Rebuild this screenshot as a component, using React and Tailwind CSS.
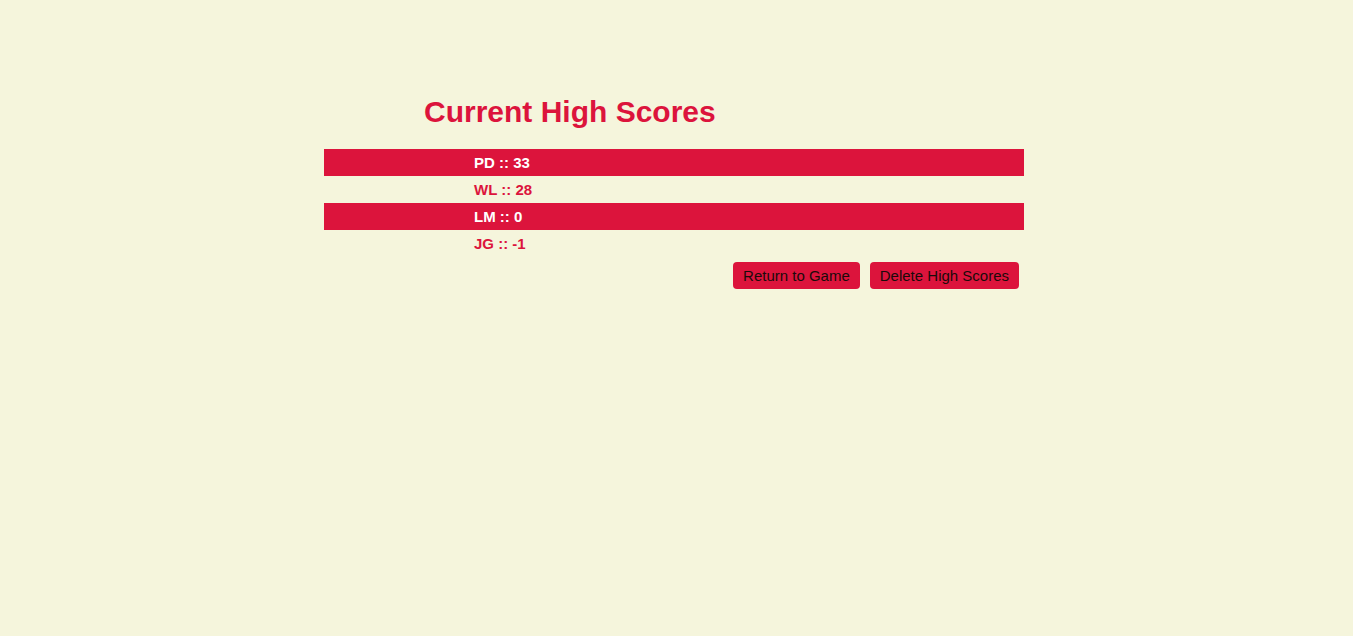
import React from 'react';

const scores = [
  { name: 'PD', score: 33 },
  { name: 'WL', score: 28 },
  { name: 'LM', score: 0 },
  { name: 'JG', score: -1 },
];

export default function App() {
  return (
    <div className="min-h-screen bg-[#f5f5dc] pt-[94px]" style={{ fontFamily: "'Liberation Sans', Arial, sans-serif" }}>
      <div className="ml-[324px] w-[700px]">
        <h1 className="pl-[100px] text-[30px] leading-[36px] font-bold text-[#dc143c]">Current High Scores</h1>

        <div className="mt-[19px]">
          {scores.map((s, i) => (
            <div key={s.name}
              className={`h-[27px] flex items-center pl-[150px] pt-[1px] text-[15px] font-bold
                ${i % 2 === 0 ? 'bg-[#dc143c] text-white' : 'text-[#dc143c]'}`}>
              {s.name} :: {s.score}
            </div>
          ))}
        </div>

        <div className="flex justify-end gap-[10px] pr-[5px] mt-[5px]">
          <button className="h-[27px] px-[10px] pt-[1px] rounded-[4px] bg-[#dc143c] text-[15px] text-[#1a0a0a]">Return to Game</button>
          <button className="h-[27px] px-[10px] pt-[1px] rounded-[4px] bg-[#dc143c] text-[15px] text-[#1a0a0a]">Delete High Scores</button>
        </div>
      </div>
    </div>
  );
}
